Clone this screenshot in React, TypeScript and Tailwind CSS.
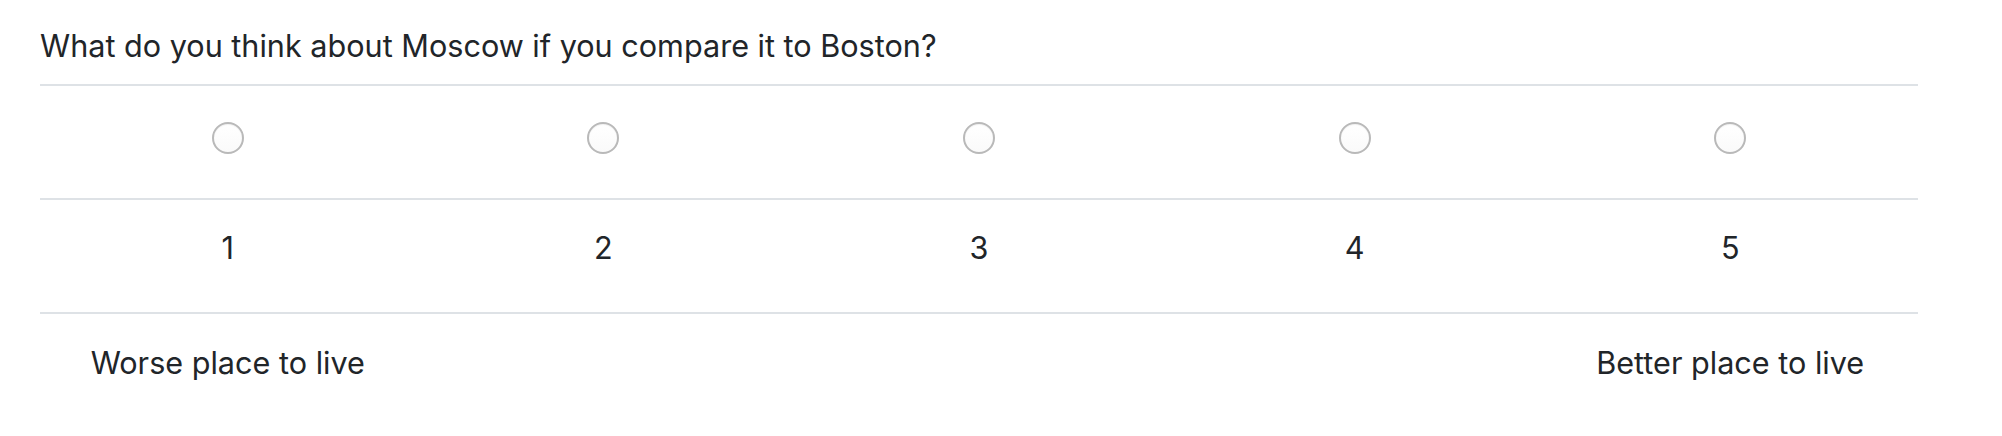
import React from "react";

const options = [1, 2, 3, 4, 5];

function Radio() {
  return (
    <span className="block w-[32px] h-[32px] rounded-full border-2 border-[#b9b9b9] bg-gradient-to-b from-white to-[#fafafa] shadow-[inset_0_1px_1px_rgba(0,0,0,0.06)]" />
  );
}

export default function App() {
  return (
    <div className="w-[2002px] h-[436px] bg-white px-[40px] pt-[22px] text-[30.6px] leading-[48px] text-[#212529] font-['Inter',sans-serif]">
      <h5 className="h-[48px] mb-[14px]">
        What do you think about Moscow if you compare it to Boston?
      </h5>

      <div className="w-[1878px]">
        <div className="grid grid-cols-5 h-[114px] border-t-2 border-[#dee2e6] pt-[36px]">
          {options.map((n) => (
            <div key={n} className="flex justify-center">
              <Radio />
            </div>
          ))}
        </div>

        <div className="grid grid-cols-5 h-[114px] border-t-2 border-[#dee2e6] pt-[24px]">
          {options.map((n) => (
            <div key={n} className="text-center">
              {n}
            </div>
          ))}
        </div>

        <div className="grid grid-cols-5 border-t-2 border-[#dee2e6] pt-[25px]">
          <div className="text-center">Worse place to live</div>
          <div />
          <div />
          <div />
          <div className="text-center">Better place to live</div>
        </div>
      </div>
    </div>
  );
}
